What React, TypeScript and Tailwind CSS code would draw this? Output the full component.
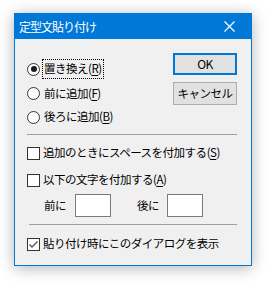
import React from "react";

const Radio = ({ checked }: { checked?: boolean }) => (
  <span className="flex h-[13px] w-[13px] shrink-0 items-center justify-center rounded-full border border-[#333] bg-white">
    {checked && <span className="h-[6px] w-[6px] rounded-full bg-[#1a1a1a]" />}
  </span>
);

const Check = ({ checked }: { checked?: boolean }) => (
  <span className="flex h-[13px] w-[13px] shrink-0 items-center justify-center border border-[#333] bg-white">
    {checked && (
      <svg width="11" height="11" viewBox="0 0 11 11">
        <path d="M1.5 5.5 L4 8 L9.5 2.5" fill="none" stroke="#555" strokeWidth="1.4" />
      </svg>
    )}
  </span>
);

const Label = ({ text, mn }: { text: string; mn?: string }) => (
  <span>
    {text}
    {mn && (
      <>
        (<span className="underline underline-offset-2">{mn}</span>)
      </>
    )}
  </span>
);

export default function App() {
  const radios = [
    { text: "置き換え", mn: "R", checked: true, h: "h-[24px]" },
    { text: "前に追加", mn: "F", h: "h-[25px]" },
    { text: "後ろに追加", mn: "B", h: "h-[22px]" },
  ];

  return (
    <div className="h-[284px] w-[268px] bg-white pl-[14px] pt-[13px] font-['Noto_Sans_CJK_JP','Liberation_Sans',sans-serif] text-[11.5px] leading-none tracking-[-0.5px] text-black">
      <div className="flex h-[253px] w-[238px] flex-col border border-[#0078d7] bg-[#f0f0f0] shadow-[0_2px_14px_rgba(0,0,0,0.3)]">
        {/* Title bar */}
        <div className="flex h-[25px] shrink-0 items-center justify-between bg-[#0078d7] pl-[4px] pr-[16px] text-[12px] text-white">
          <span className="tracking-[-1px]">定型文貼り付け</span>
          <svg width="11" height="11" viewBox="0 0 11 11">
            <path d="M0.5 0.5 L10.5 10.5 M10.5 0.5 L0.5 10.5" stroke="#fff" strokeWidth="1.2" />
          </svg>
        </div>

        {/* Content */}
        <div className="flex flex-col pl-[12px] pr-[14px]">
          <div className="flex h-[95px] justify-between">
            <div className="flex flex-col pt-[18px]">
              {radios.map((r, i) => (
                <div key={i} className={`flex items-center gap-[2px] ${r.h}`}>
                  <Radio checked={r.checked} />
                  <span
                    className={
                      r.checked
                        ? "border border-dotted border-black px-px py-[3px]"
                        : "px-[2px]"
                    }
                  >
                    <Label text={r.text} mn={r.mn} />
                  </span>
                </div>
              ))}
            </div>
            <div className="flex flex-col gap-[7px] pt-[14px]">
              <button className="flex h-[22px] w-[64px] items-center justify-center border-2 border-[#0078d7] bg-[#e1e1e1] text-[12px]">
                OK
              </button>
              <button className="flex h-[23px] w-[64px] items-center justify-center border border-[#adadad] bg-[#e1e1e1]">
                キャンセル
              </button>
            </div>
          </div>

          <div className="h-px bg-[#a0a0a0]" />

          <div className="mt-[6px] flex h-[24px] items-center gap-[3px]">
            <Check />
            <Label text="追加のときにスペースを付加する" mn="S" />
          </div>
          <div className="mt-[3px] flex h-[24px] items-center gap-[3px]">
            <Check />
            <Label text="以下の文字を付加する" mn="A" />
          </div>
          <div className="mt-[2px] flex h-[23px] items-center pl-[17px]">
            <span className="w-[31px]">前に</span>
            <span className="h-[23px] w-[36px] border border-[#7a7a7a] bg-white" />
            <span className="ml-[26px] w-[30px]">後に</span>
            <span className="h-[23px] w-[36px] border border-[#7a7a7a] bg-white" />
          </div>

          <div className="mt-[7px] ml-[2px] h-px bg-[#a0a0a0]" />

          <div className="mt-[7px] flex h-[24px] items-center gap-[3px]">
            <Check checked />
            <Label text="貼り付け時にこのダイアログを表示" />
          </div>
        </div>
      </div>
    </div>
  );
}
